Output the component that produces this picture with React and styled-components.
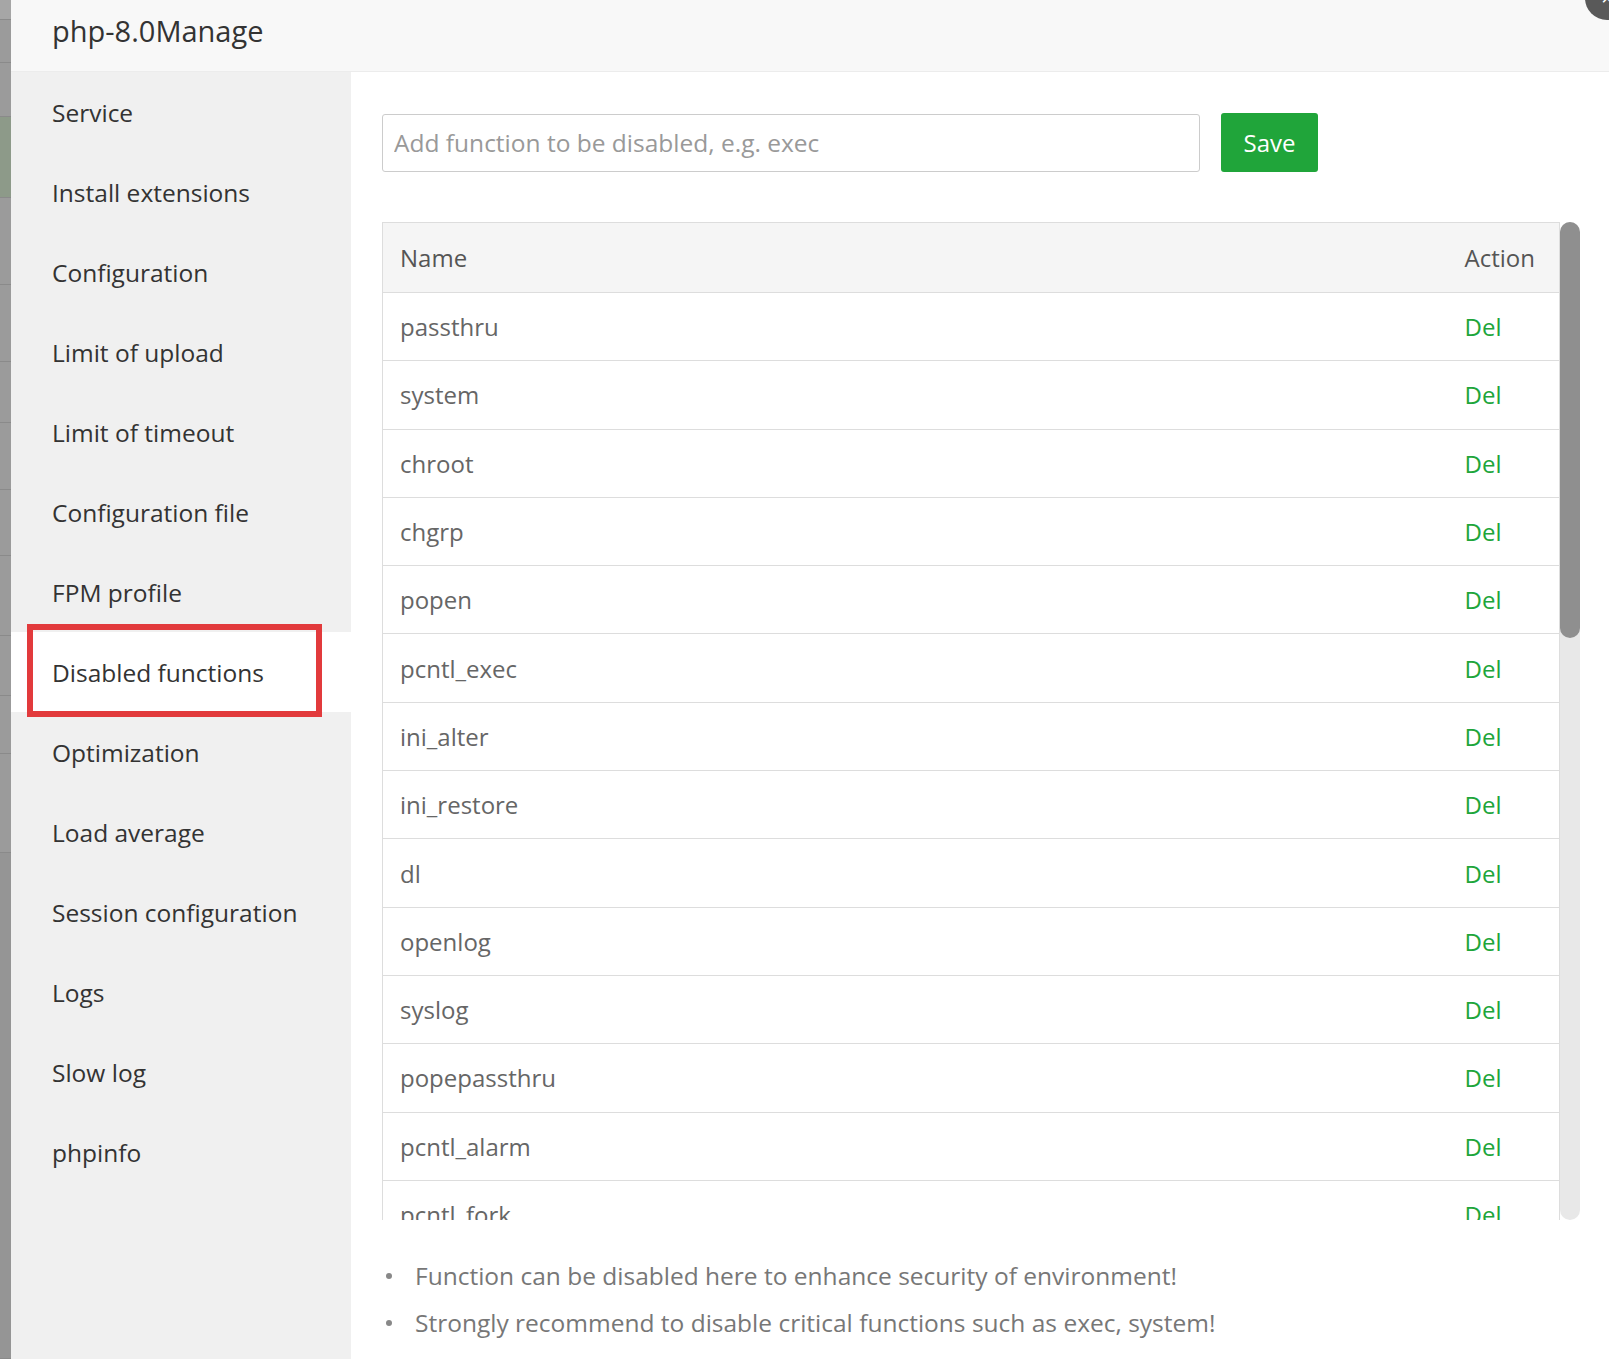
import React from "react";
import styled, { createGlobalStyle } from "styled-components";

const GlobalStyle = createGlobalStyle`
  html, body {
    margin: 0;
    padding: 0;
    width: 1609px;
    height: 1359px;
    overflow: hidden;
    background: #fff;
  }
  body {
    font-family: "Open Sans", "Noto Sans", "Liberation Sans", sans-serif;
  }
  * {
    box-sizing: border-box;
  }
`;

const Page = styled.div`
  display: flex;
  width: 1609px;
  height: 1359px;
  position: relative;
  overflow: hidden;
`;

const Backdrop = styled.div`
  width: 11px;
  flex-shrink: 0;
  display: flex;
  flex-direction: column;
  background: #999;
`;
const BackdropRow = styled.div`
  height: ${(p) => p.h}px;
  background: ${(p) => p.bg || "#9b9b9b"};
  border-bottom: 1px solid #8a8a8a;
`;

const Dialog = styled.section`
  flex: 1;
  display: flex;
  flex-direction: column;
  background: #fff;
`;

const Header = styled.header`
  height: 72px;
  flex-shrink: 0;
  display: flex;
  align-items: center;
  padding-left: 41px;
  padding-bottom: 10px;
  background: #f8f8f8;
  border-bottom: 1px solid #ececec;
  color: #333;
  font-size: 29px;
`;

const CloseBtn = styled.button`
  position: absolute;
  top: -24px;
  right: -20px;
  width: 44px;
  height: 44px;
  border-radius: 50%;
  border: none;
  background: #595959;
  color: #fff;
  font-size: 20px;
  padding: 0;
`;

const Body = styled.div`
  flex: 1;
  display: flex;
  min-height: 0;
`;

const Sidebar = styled.nav`
  width: 340px;
  flex-shrink: 0;
  background: #f0f0f0;
  display: flex;
  flex-direction: column;
`;

const MenuItem = styled.div`
  position: relative;
  height: 80px;
  display: flex;
  align-items: center;
  padding-left: 41px;
  font-size: 24.5px;
  color: #333;
  white-space: nowrap;
  background: ${(p) => (p.active ? "#fff" : "transparent")};
`;

const Highlight = styled.span`
  position: absolute;
  left: 16px;
  top: -8px;
  width: 295px;
  height: 93px;
  border: 6px solid #e23a3c;
  pointer-events: none;
`;

const Content = styled.main`
  flex: 1;
  padding: 41px 0 0 31px;
  display: flex;
  flex-direction: column;
`;

const FormRow = styled.div`
  display: flex;
  gap: 21px;
  align-items: center;
`;

const Input = styled.input`
  width: 818px;
  height: 58px;
  border: 1px solid #ccc;
  border-radius: 3px;
  padding: 0 11px;
  font-family: inherit;
  font-size: 24.5px;
  color: #333;
  outline: none;
  &::placeholder {
    color: #999;
  }
`;

const SaveButton = styled.button`
  width: 97px;
  height: 59px;
  border: none;
  border-radius: 3px;
  background: #20a53a;
  color: #fff;
  font-family: inherit;
  font-size: 24px;
`;

const TableFrame = styled.div`
  margin-top: 50px;
  display: flex;
  width: 1198px;
  height: 998px;
`;

const TableViewport = styled.div`
  width: 1178px;
  height: 100%;
  overflow: hidden;
`;

const ScrollTrack = styled.div`
  width: 20px;
  height: 100%;
  background: #e8e8e8;
  border-radius: 10px;
`;

const ScrollThumb = styled.div`
  width: 100%;
  background: #8f8f8f;
  border-radius: 10px;
`;

const Table = styled.table`
  width: 100%;
  border-collapse: collapse;
  border: 1px solid #ddd;
  font-size: 24px;
`;

const Th = styled.th`
  height: 70px;
  padding: 0 17px;
  text-align: left;
  font-weight: normal;
  color: #555;
  background: #f5f5f5;
  border-bottom: 1px solid #ddd;
  white-space: nowrap;
  width: ${(p) => p.w || "auto"};
`;

const Td = styled.td`
  height: 68.3px;
  padding: 0 17px;
  border-bottom: 1px solid #ddd;
  color: #666;
  white-space: nowrap;
`;

const DelLink = styled.a`
  color: #20a53a;
  text-decoration: none;
  cursor: pointer;
`;

const Notes = styled.ul`
  list-style: none;
  margin: 32px 0 0;
  padding: 0 0 0 4px;
`;

const Note = styled.li`
  position: relative;
  line-height: 47px;
  padding-left: 29px;
  font-size: 24.5px;
  color: #777;
  white-space: nowrap;
  &::before {
    content: "";
    position: absolute;
    left: 0;
    top: 21px;
    width: 6px;
    height: 6px;
    border-radius: 50%;
    background: #888;
  }
`;

const menu = [
  "Service",
  "Install extensions",
  "Configuration",
  "Limit of upload",
  "Limit of timeout",
  "Configuration file",
  "FPM profile",
  "Disabled functions",
  "Optimization",
  "Load average",
  "Session configuration",
  "Logs",
  "Slow log",
  "phpinfo",
];

const functions = [
  "passthru",
  "system",
  "chroot",
  "chgrp",
  "popen",
  "pcntl_exec",
  "ini_alter",
  "ini_restore",
  "dl",
  "openlog",
  "syslog",
  "popepassthru",
  "pcntl_alarm",
  "pcntl_fork",
  "pcntl_waitpid",
  "pcntl_wait",
  "pcntl_wifexited",
  "pcntl_wifstopped",
  "pcntl_wifsignaled",
  "pcntl_wifcontinued",
  "pcntl_wexitstatus",
  "pcntl_wtermsig",
  "pcntl_wstopsig",
  "pcntl_signal",
  "pcntl_signal_dispatch",
  "pcntl_get_last_error",
  "pcntl_strerror",
  "pcntl_sigprocmask",
  "pcntl_sigwaitinfo",
  "pcntl_sigtimedwait",
  "pcntl_getpriority",
  "pcntl_setpriority",
  "imap_open",
  "apache_setenv",
];

const backdrop = [
  { h: 20, bg: "#a6a6a6" },
  { h: 43 },
  { h: 54 },
  { h: 81, bg: "#8d9a89" },
  { h: 87 },
  { h: 77 },
  { h: 61 },
  { h: 67 },
  { h: 66 },
  { h: 80 },
  { h: 60 },
  { h: 58 },
  { h: 99 },
  { h: 506, bg: "#959595" },
];

// visible part of the list vs. the whole list, for the thumb length
const VIEW_H = 998;
const CONTENT_H = 70 + functions.length * 68.3;

function App() {
  const thumbH = Math.round((VIEW_H / CONTENT_H) * VIEW_H);
  return (
    <>
      <GlobalStyle />
      <Page>
        <Backdrop>
          {backdrop.map((r, i) => (
            <BackdropRow key={i} h={r.h} bg={r.bg} />
          ))}
        </Backdrop>
        <Dialog>
          <Header>php-8.0Manage</Header>
          <Body>
            <Sidebar>
              {menu.map((m) => (
                <MenuItem key={m} active={m === "Disabled functions"}>
                  {m}
                  {m === "Disabled functions" && <Highlight />}
                </MenuItem>
              ))}
            </Sidebar>
            <Content>
              <FormRow>
                <Input placeholder="Add function to be disabled, e.g. exec" />
                <SaveButton>Save</SaveButton>
              </FormRow>
              <TableFrame>
                <TableViewport>
                  <Table>
                    <thead>
                      <tr>
                        <Th>Name</Th>
                        <Th w="112px">Action</Th>
                      </tr>
                    </thead>
                    <tbody>
                      {functions.map((f) => (
                        <tr key={f}>
                          <Td>{f}</Td>
                          <Td>
                            <DelLink>Del</DelLink>
                          </Td>
                        </tr>
                      ))}
                    </tbody>
                  </Table>
                </TableViewport>
                <ScrollTrack>
                  <ScrollThumb style={{ height: thumbH }} />
                </ScrollTrack>
              </TableFrame>
              <Notes>
                <Note>Function can be disabled here to enhance security of environment!</Note>
                <Note>Strongly recommend to disable critical functions such as exec, system!</Note>
              </Notes>
            </Content>
          </Body>
        </Dialog>
        <CloseBtn>×</CloseBtn>
      </Page>
    </>
  );
}

export default App;
